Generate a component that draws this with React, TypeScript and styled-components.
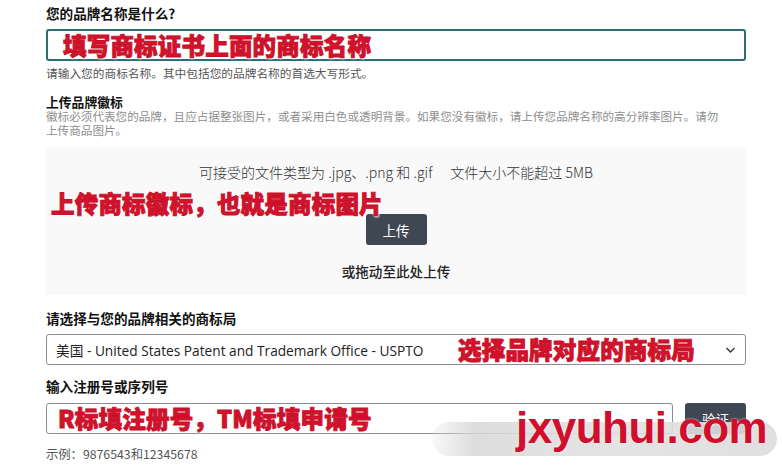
import React from "react";
import styled, { createGlobalStyle } from "styled-components";

const Global = createGlobalStyle`
  html, body { margin: 0; padding: 0; background: #ffffff; }
  body { font-family: "Noto Sans CJK SC", "Noto Sans", sans-serif; color: #111; }
  * { box-sizing: border-box; }
`;

const Page = styled.div`
  position: relative;
  width: 782px;
  height: 468px;
  overflow: hidden;
  padding: 5px 36px 0 46px;
`;

const Form = styled.div`
  display: flex;
  flex-direction: column;
  width: 700px;
`;

const Label = styled.div<{ $mt?: number; $size?: number; $lh?: number }>`
  font-size: ${(p) => p.$size ?? 13.6}px;
  font-weight: 700;
  line-height: ${(p) => p.$lh ?? 17}px;
  color: #111;
  margin-top: ${(p) => p.$mt ?? 0}px;
  white-space: nowrap;
`;

const Hint = styled.div<{ $mt?: number; $muted?: boolean; $size?: number }>`
  font-size: ${(p) => p.$size ?? 11.7}px;
  line-height: ${(p) => (p.$muted ? 14 : 16)}px;
  color: ${(p) => (p.$muted ? "#8e8e8e" : "#555")};
  margin-top: ${(p) => p.$mt ?? 0}px;
  white-space: nowrap;
`;

const Field = styled.div<{ $focus?: boolean; $mt?: number; $grow?: boolean }>`
  position: relative;
  height: ${(p) => (p.$focus ? 32 : 31)}px;
  flex: ${(p) => (p.$grow ? "1 1 auto" : "0 0 auto")};
  margin-top: ${(p) => p.$mt ?? 0}px;
  border: ${(p) => (p.$focus ? "2px solid #2b6d74" : "1px solid #8d8d8d")};
  border-radius: 3px;
  background: #fff;
  display: flex;
  align-items: center;
  padding: 0 9px;
`;

const SelectText = styled.span`
  font-family: "Open Sans", "Noto Sans CJK SC", sans-serif;
  font-size: 13.7px;
  color: #222;
  white-space: nowrap;
`;

const Chevron = styled.svg`
  position: absolute;
  right: 9px;
  top: 11px;
`;

const Annot = styled.div<{ $x: number; $y: number }>`
  position: absolute;
  left: ${(p) => p.$x}px;
  top: ${(p) => p.$y}px;
  font-family: "Noto Sans CJK SC", sans-serif;
  font-weight: 900;
  font-size: 23.5px;
  line-height: 26px;
  letter-spacing: 0.2px;
  color: #d3122b;
  white-space: nowrap;
  text-shadow: 0 0 2px #fff, 0 0 3px #fff, 1px 1px 2px rgba(255,255,255,0.9);
  -webkit-text-stroke: 0.9px #c8102a;
`;

const Dropzone = styled.div`
  position: relative;
  margin-top: 10px;
  height: 148px;
  background: #f9f9fa;
  display: flex;
  flex-direction: column;
  align-items: center;
  padding-top: 16px;
`;

const Accept = styled.div`
  font-size: 14px;
  font-weight: 300;
  line-height: 18px;
  color: #333;
  white-space: nowrap;
`;

const Gap = styled.span`
  display: inline-block;
  width: 18px;
`;

const DarkButton = styled.div<{ $mt?: number }>`
  width: 61px;
  height: 31px;
  margin-top: ${(p) => p.$mt ?? 0}px;
  background: #3f4753;
  border-radius: 3px;
  color: #fff;
  font-size: 13.5px;
  display: flex;
  align-items: center;
  justify-content: center;
  flex-shrink: 0;
`;

const DragText = styled.div`
  margin-top: 17px;
  font-size: 13.6px;
  font-weight: 500;
  line-height: 18px;
  color: #222;
`;

const Row = styled.div`
  display: flex;
  gap: 12px;
  margin-top: 8px;
`;

const Watermark = styled.div`
  position: absolute;
  left: 432px;
  top: 422px;
  width: 345px;
  height: 34px;
  border-radius: 17px;
  background: linear-gradient(90deg, rgba(225,225,225,0.2) 0%, rgba(215,215,215,0.85) 12%, rgba(225,225,225,0.9) 50%, rgba(220,220,220,0.9) 100%);
  filter: blur(0.5px);
`;

const WaterText = styled.div`
  position: absolute;
  left: 516px;
  top: 400px;
  font-family: "Liberation Sans", "DejaVu Sans", sans-serif;
  font-weight: 700;
  font-size: 44px;
  line-height: 56px;
  letter-spacing: -0.5px;
  color: #d10f2c;
  text-shadow: 0 0 2px #fff;
`;

export default function App() {
  return (
    <>
      <Global />
      <Page>
        <Form>
          <Label>您的品牌名称是什么?</Label>
          <Field $focus $mt={7}>
            <Annot $x={15} $y={1}>填写商标证书上面的商标名称</Annot>
          </Field>
          <Hint $mt={4}>请输入您的商标名称。其中包括您的品牌名称的首选大写形式。</Hint>
          <Label $mt={13} $size={12.8} $lh={15}>上传品牌徽标</Label>
          <Hint $muted $size={11.6}>
            徽标必须代表您的品牌，且应占据整张图片，或者采用白色或透明背景。如果您没有徽标，请上传您品牌名称的高分辨率图片。请勿
            <br />
            上传商品图片。
          </Hint>
          <Dropzone>
            <Accept>
              可接受的文件类型为 .jpg、.png 和 .gif<Gap />文件大小不能超过 5MB
            </Accept>
            <Annot $x={5} $y={43}>上传商标徽标，也就是商标图片</Annot>
            <DarkButton $mt={33}>上传</DarkButton>
            <DragText>或拖动至此处上传</DragText>
          </Dropzone>
          <Label $mt={15}>请选择与您的品牌相关的商标局</Label>
          <Field $mt={7}>
            <SelectText>美国 - United States Patent and Trademark Office - USPTO</SelectText>
            <Annot $x={411} $y={1}>选择品牌对应的商标局</Annot>
            <Chevron width="11" height="8" viewBox="0 0 11 8">
              <path d="M1.5 2 L5.5 6 L9.5 2" fill="none" stroke="#333" strokeWidth="1.4" />
            </Chevron>
          </Field>
          <Label $mt={13}>输入注册号或序列号</Label>
          <Row>
            <Field $grow>
              <Annot $x={11} $y={1}>R标填注册号，TM标填申请号</Annot>
            </Field>
            <DarkButton>验证</DarkButton>
          </Row>
          <Hint $mt={12} $size={12.3}>示例：9876543和12345678</Hint>
        </Form>
        <Watermark />
        <WaterText>jxyuhui.com</WaterText>
      </Page>
    </>
  );
}
